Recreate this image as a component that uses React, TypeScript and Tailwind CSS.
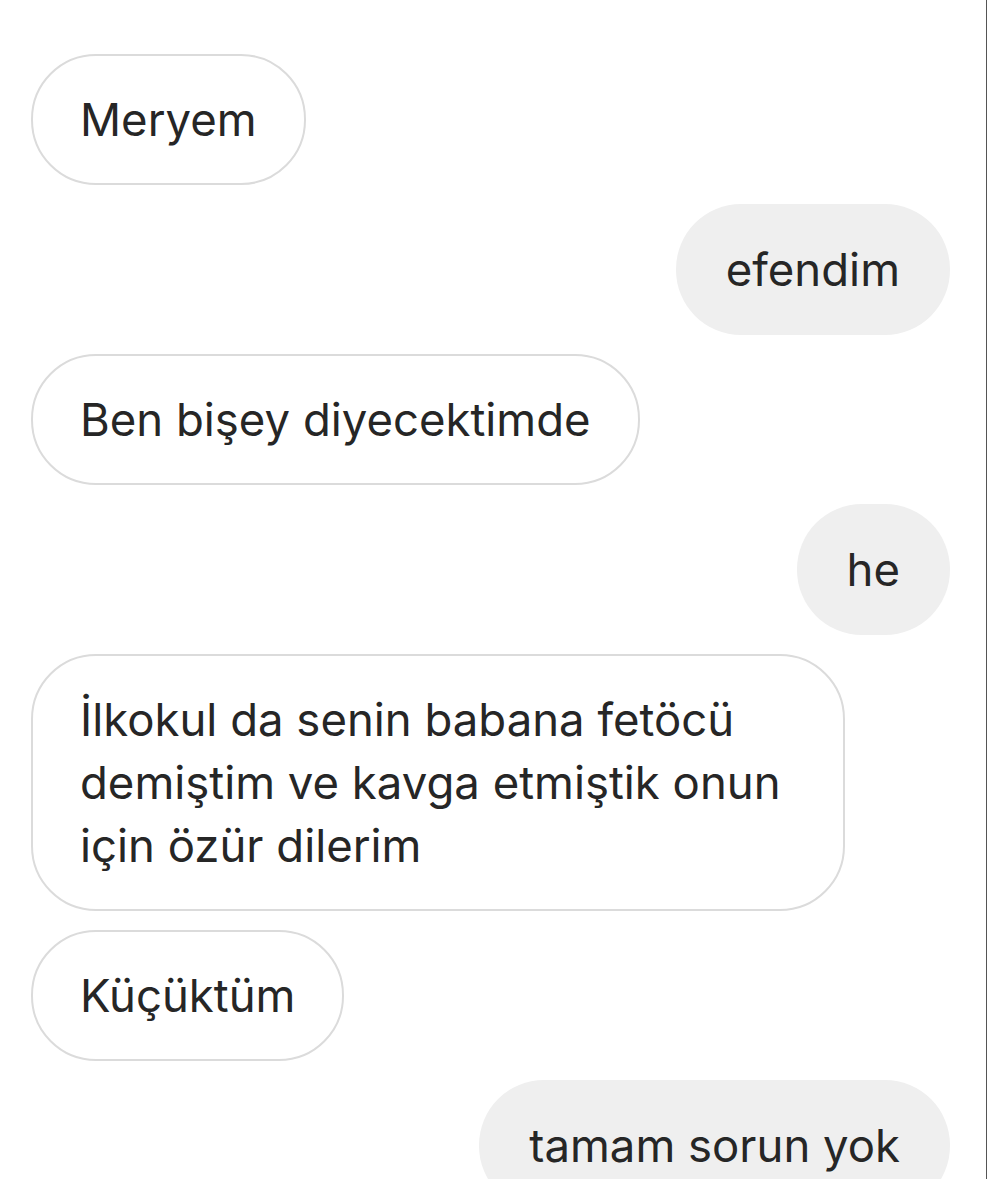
const messages: { text: string; mine: boolean }[] = [
  { text: 'Meryem', mine: false },
  { text: 'efendim', mine: true },
  { text: 'Ben bişey diyecektimde', mine: false },
  { text: 'he', mine: true },
  { text: 'İlkokul da senin babana fetöcü demiştim ve kavga etmiştik onun için özür dilerim', mine: false },
  { text: 'Küçüktüm', mine: false },
  { text: 'tamam sorun yok', mine: true },
  { text: 'Tamam', mine: true },
];

function Bubble({ text, mine }: { text: string; mine: boolean }) {
  return (
    <div className={mine ? 'flex justify-end' : 'flex justify-start'}>
      {mine ? (
        <div className="max-w-[814px] rounded-[65px] bg-[#efefef] px-[50px] py-[34px] text-[45.5px] leading-[63px] text-[#262626]">
          {text}
        </div>
      ) : (
        <div className="max-w-[814px] rounded-[65px] border-2 border-[#dbdbdb] bg-white px-[47px] py-[32px] text-[45.5px] leading-[63px] text-[#262626]">
          {text}
        </div>
      )}
    </div>
  );
}

export default function App() {
  return (
    <div className="h-[1179px] w-[988px] overflow-hidden bg-white font-['Inter','Noto_Sans',sans-serif]">
      <div className="h-full w-[987px] border-r border-[#555555]">
        <div className="flex flex-col gap-[19px] pl-[31px] pr-[36px] pt-[54px]">
          {messages.map((m, i) => (
            <Bubble key={i} text={m.text} mine={m.mine} />
          ))}
        </div>
      </div>
    </div>
  );
}
